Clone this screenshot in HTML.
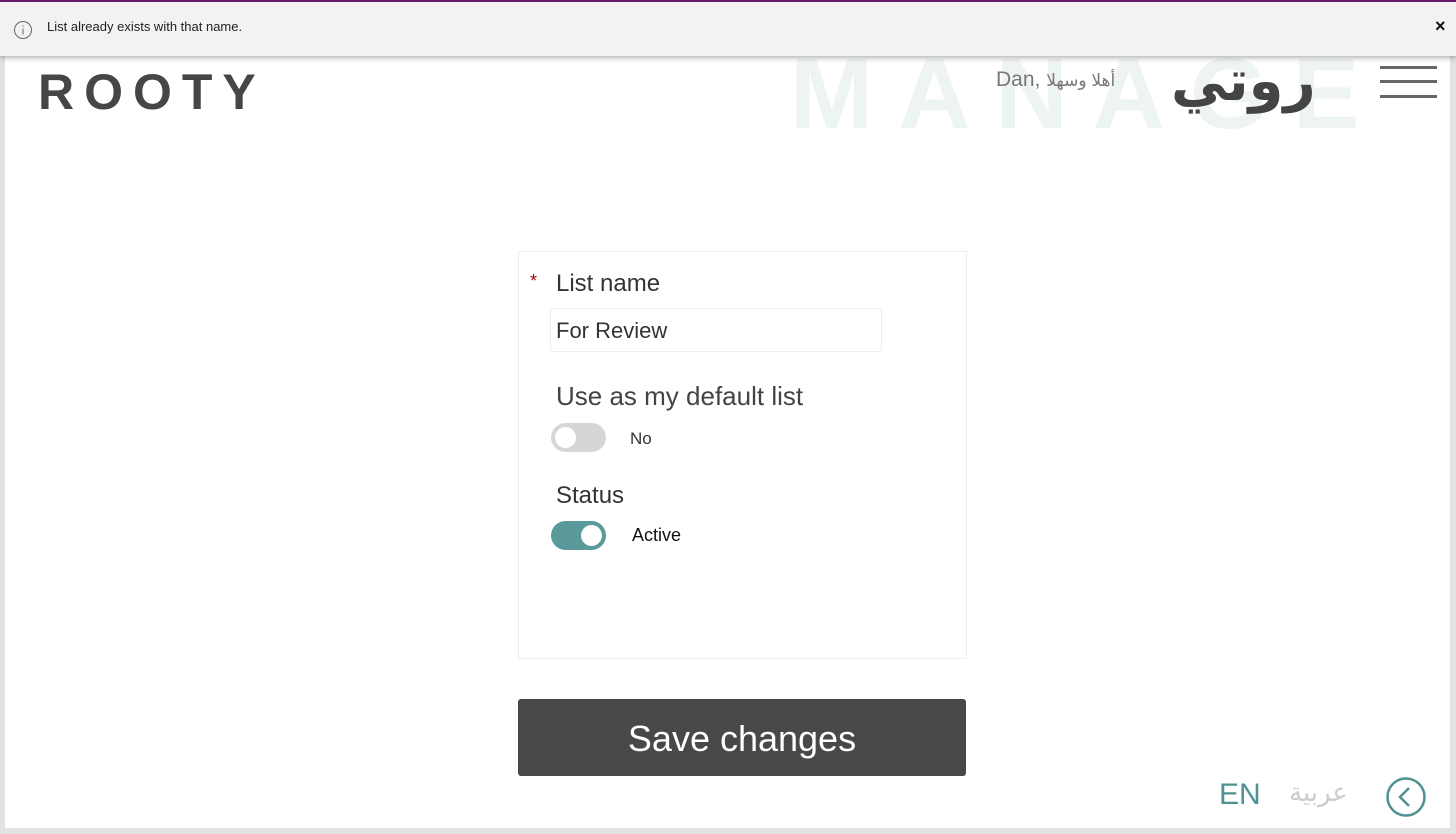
<!DOCTYPE html>
<html><head><meta charset="utf-8"><style>
html,body{margin:0;padding:0}
body{width:1456px;height:834px;position:relative;overflow:hidden;background:#e2e2e2;font-family:"Liberation Sans",sans-serif;color:#444}
.page{position:absolute;left:5px;top:0;width:1445px;height:828px;background:#fff;overflow:hidden}
.abs{position:absolute;white-space:nowrap}
.toast{position:absolute;left:0;top:0;width:1456px;height:56px;background:#f3f2f1;border-top:2px solid #6b1a6b;box-sizing:border-box;box-shadow:0 2px 5px rgba(0,0,0,.3);z-index:5}
</style></head><body>
<div class="page">
  <div class="abs" style="left:785px;top:44px;font-size:100px;font-weight:bold;letter-spacing:25px;color:#eef3f3;line-height:100px">MANAGE</div>
  <div class="abs" style="left:33px;top:64px;font-size:50px;font-weight:bold;letter-spacing:10px;color:#464646;line-height:56px">ROOTY</div>
  <div class="abs" style="left:991px;top:68px;font-size:21px;color:#777;font-family:'Liberation Sans','DejaVu Sans',sans-serif">Dan, <span style="font-size:17px">أهلا وسهلا</span></div>
  <div class="abs" style="left:1166px;top:50px;font-size:56px;font-weight:bold;color:#444;font-family:'DejaVu Sans',sans-serif;line-height:64px">روتي</div>
  <div class="abs" style="left:1375px;top:66px;width:57px;height:3px;background:#666"></div>
  <div class="abs" style="left:1375px;top:80px;width:57px;height:3px;background:#666"></div>
  <div class="abs" style="left:1375px;top:95px;width:57px;height:3px;background:#666"></div>

  <div class="abs" style="left:513px;top:251px;width:447px;height:406px;border:1px solid #eee"></div>
  <div class="abs" style="left:525px;top:271px;color:#a00;font-size:18px">*</div>
  <div class="abs" style="left:551px;top:270px;font-size:24px;color:#333">List name</div>
  <div class="abs" style="left:545px;top:308px;width:330px;height:42px;border:1px solid #eee;border-radius:3px"></div>
  <div class="abs" style="left:551px;top:318px;font-size:22px;color:#333">For Review</div>
  <div class="abs" style="left:551px;top:381px;font-size:26px;color:#444">Use as my default list</div>
  <div class="abs" style="left:546px;top:423px;width:55px;height:29px;border-radius:15px;background:#d6d6d6"></div>
  <div class="abs" style="left:550px;top:427px;width:21px;height:21px;border-radius:50%;background:#fff"></div>
  <div class="abs" style="left:625px;top:429px;font-size:17px;color:#333">No</div>
  <div class="abs" style="left:551px;top:482px;font-size:24px;color:#333">Status</div>
  <div class="abs" style="left:546px;top:521px;width:55px;height:29px;border-radius:15px;background:#5b9a9a"></div>
  <div class="abs" style="left:576px;top:525px;width:21px;height:21px;border-radius:50%;background:#fff"></div>
  <div class="abs" style="left:627px;top:525px;font-size:18px;color:#111">Active</div>

  <div class="abs" style="left:513px;top:699px;width:448px;height:77px;background:#484848;border-radius:3px;color:#fff;font-size:36px;text-align:center;line-height:79px">Save changes</div>

  <div class="abs" style="left:1214px;top:778px;font-size:30px;color:#4e9191">EN</div>
  <div class="abs" style="left:1284px;top:778px;font-size:26px;color:#ccc;font-family:'DejaVu Sans',sans-serif">عربية</div>
  <svg class="abs" style="left:1380px;top:776px" width="42" height="42" viewBox="0 0 42 42"><circle cx="21" cy="21" r="18.5" fill="none" stroke="#4e9191" stroke-width="2.5"/><path d="M24 12 L15 21 L24 30" fill="none" stroke="#4e9191" stroke-width="2.5"/></svg>
</div>
<div class="toast">
  <svg class="abs" style="left:13px;top:18px" width="20" height="20" viewBox="0 0 20 20"><circle cx="10" cy="10" r="8.5" fill="none" stroke="#666" stroke-width="1"/><rect x="9.5" y="8.5" width="1" height="6" fill="#666"/><rect x="9.5" y="5.5" width="1" height="1.3" fill="#666"/></svg>
  <div class="abs" style="left:47px;top:17px;font-size:13px;color:#222">List already exists with that name.</div>
  <div class="abs" style="left:1435px;top:14px;font-size:18px;font-weight:bold;color:#111">×</div>
</div>
</body></html>
